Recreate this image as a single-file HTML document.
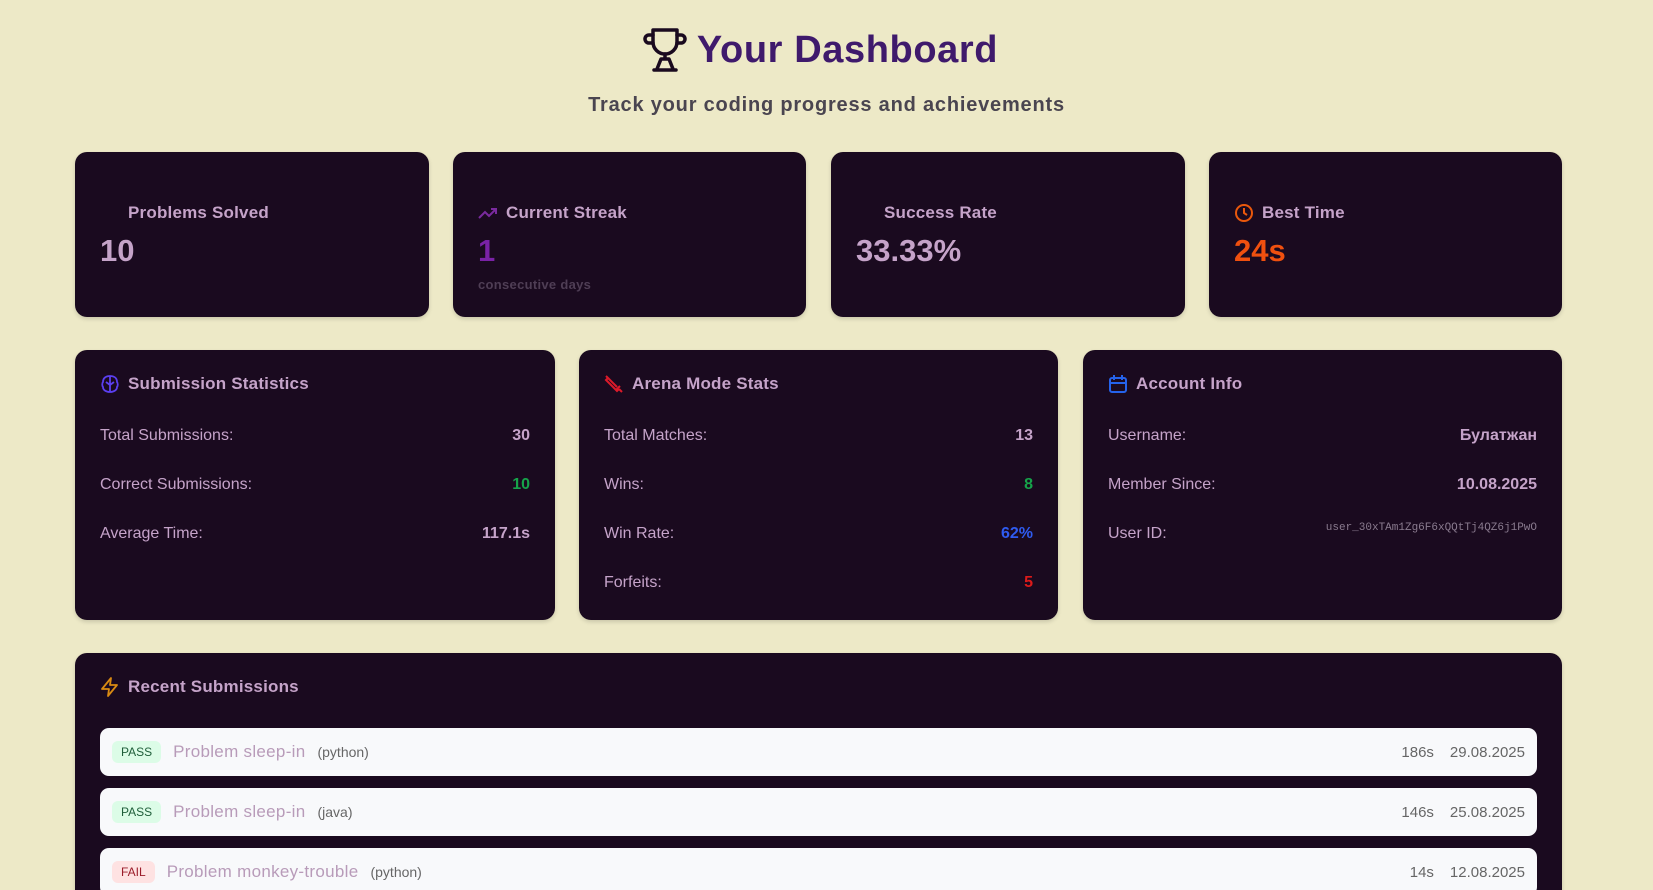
<!DOCTYPE html>
<html style="width:1653px;height:890px;overflow:hidden"><head><meta charset="utf-8"><style>
*{box-sizing:border-box;margin:0;padding:0}
body{width:1653px;height:890px;overflow:hidden;background:#ede9c7;font-family:"Liberation Sans",sans-serif;color:#c5a3c9;position:relative}
.h{position:absolute;top:27px;left:0;width:1653px;text-align:center}
.h h1{font-size:38px;font-weight:700;color:#3f1a6c;display:inline-flex;align-items:center;gap:10px;letter-spacing:0.6px;margin-left:-12px}
.sub{position:absolute;top:94px;width:1653px;text-align:center;font-size:20px;font-weight:700;color:#4a4550;letter-spacing:0.8px}
.card{position:absolute;background:#1a0a1f;border-radius:12px;box-shadow:0 2px 4px rgba(0,0,0,.15)}
.lab{position:absolute;left:25px;top:51px;font-size:17px;font-weight:700;display:flex;align-items:center;gap:8px;letter-spacing:0.2px}
.val{position:absolute;left:25px;top:81px;font-size:31px;font-weight:700}
.small{position:absolute;left:25px;top:125px;font-size:13px;font-weight:700;color:#4f3e55;letter-spacing:0.3px}
.ch{position:absolute;left:25px;top:24px;font-size:17px;font-weight:700;display:flex;align-items:center;gap:8px;letter-spacing:0.2px}
.row{position:absolute;left:25px;right:25px;display:flex;justify-content:space-between;font-size:16px}
.row b{font-weight:700}
.sr{position:absolute;left:25px;right:25px;height:48px;background:#f8f9fb;border-radius:9px;display:flex;align-items:center;padding:0 12px;font-size:16px}
.tag{font-size:12px;padding:4px 9px;border-radius:6px;margin-right:12px}
.pass{background:#dcfce7;color:#1f5e3a}.fail{background:#fee2e2;color:#9b1c2a}
.pn{color:#b89bb9;font-size:17px;margin-right:12px;letter-spacing:0.3px}.lg{color:#666;font-size:14px}
.rt{margin-left:auto;color:#666;font-size:15px}.rt span{margin-left:16px}
</style></head><body>
<div class="h"><h1><svg width="44" height="46" viewBox="0 0 44 46" fill="none" stroke="#1a0a1f" stroke-width="3.5" stroke-linecap="round" stroke-linejoin="round"><path d="M10 3h24v12a12 12 0 0 1-24 0z"/><path d="M10 8H6a4 4 0 0 0 0 8h4M34 8h4a4 4 0 0 1 0 8h-4"/><path d="M22 27v5M14 42l4-10h8l4 10M11 43h22"/></svg>Your Dashboard</h1></div>
<div class="sub">Track your coding progress and achievements</div>

<div class="card" style="left:75px;top:152px;width:354px;height:165px"><div class="lab"><span style="width:20px"></span>Problems Solved</div><div class="val">10</div></div>
<div class="card" style="left:453px;top:152px;width:353px;height:165px"><div class="lab"><svg width="20" height="14" viewBox="0 0 20 14" fill="none" stroke="#7a2a9e" stroke-width="2"><path d="M1 12l6-6 4 4 7-7M13 3h5v5"/></svg>Current Streak</div><div class="val" style="color:#7a22a6">1</div><div class="small">consecutive days</div></div>
<div class="card" style="left:831px;top:152px;width:354px;height:165px"><div class="lab"><span style="width:20px"></span>Success Rate</div><div class="val">33.33%</div></div>
<div class="card" style="left:1209px;top:152px;width:353px;height:165px"><div class="lab"><svg width="20" height="20" viewBox="0 0 20 20" fill="none" stroke="#ea580c" stroke-width="2"><circle cx="10" cy="10" r="8"/><path d="M10 5v5l3 2"/></svg>Best Time</div><div class="val" style="color:#f0500f">24s</div></div>

<div class="card" style="left:75px;top:350px;width:480px;height:270px">
<div class="ch"><svg width="20" height="20" viewBox="0 0 20 20" fill="none" stroke="#5b3ff0" stroke-width="1.8"><path d="M10 2C6 2 3 4 3 8c-1 1-1 4 0 5 0 3 3 5 7 5s7-2 7-5c1-1 1-4 0-5 0-4-3-6-7-6zM10 2v16M6 8l4 3 4-3"/></svg>Submission Statistics</div>
<div class="row" style="top:77px"><span>Total Submissions:</span><b>30</b></div>
<div class="row" style="top:126px"><span>Correct Submissions:</span><b style="color:#16a34a">10</b></div>
<div class="row" style="top:175px"><span>Average Time:</span><b>117.1s</b></div></div>

<div class="card" style="left:579px;top:350px;width:479px;height:270px">
<div class="ch"><svg width="20" height="20" viewBox="0 0 20 20" fill="none" stroke="#dc1a2a" stroke-width="2"><path d="M2 2l11 11M4 4l-2 2 11 11 2-2M12 16l4-4M15 15l3 3"/></svg>Arena Mode Stats</div>
<div class="row" style="top:77px"><span>Total Matches:</span><b>13</b></div>
<div class="row" style="top:126px"><span>Wins:</span><b style="color:#16a34a">8</b></div>
<div class="row" style="top:175px"><span>Win Rate:</span><b style="color:#2f5bf0">62%</b></div>
<div class="row" style="top:224px"><span>Forfeits:</span><b style="color:#dc1a1a">5</b></div></div>

<div class="card" style="left:1083px;top:350px;width:479px;height:270px">
<div class="ch"><svg width="20" height="20" viewBox="0 0 20 20" fill="none" stroke="#2563eb" stroke-width="2"><rect x="2" y="4" width="16" height="14" rx="2"/><path d="M2 9h16M6 1v5M14 1v5"/></svg>Account Info</div>
<div class="row" style="top:77px"><span>Username:</span><b>Булатжан</b></div>
<div class="row" style="top:126px"><span>Member Since:</span><b>10.08.2025</b></div>
<div class="row" style="top:175px"><span>User ID:</span><span style="font-family:'Liberation Mono',monospace;font-size:11px;color:#8a7b8f;margin-top:-3px">user_30xTAm1Zg6F6xQQtTj4QZ6j1PwO</span></div></div>

<div class="card" style="left:75px;top:653px;width:1487px;height:260px">
<div class="ch" style="top:24px"><svg width="20" height="20" viewBox="0 0 20 20" fill="none" stroke="#d98a12" stroke-width="1.8" stroke-linejoin="round"><path d="M11 1L2 12h7l-1 7 9-11h-7z"/></svg>Recent Submissions</div>
<div class="sr" style="top:75px"><span class="tag pass">PASS</span><span class="pn">Problem sleep-in</span><span class="lg">(python)</span><span class="rt">186s<span>29.08.2025</span></span></div>
<div class="sr" style="top:135px"><span class="tag pass">PASS</span><span class="pn">Problem sleep-in</span><span class="lg">(java)</span><span class="rt">146s<span>25.08.2025</span></span></div>
<div class="sr" style="top:195px"><span class="tag fail">FAIL</span><span class="pn">Problem monkey-trouble</span><span class="lg">(python)</span><span class="rt">14s<span>12.08.2025</span></span></div>
</div>
</body></html>
